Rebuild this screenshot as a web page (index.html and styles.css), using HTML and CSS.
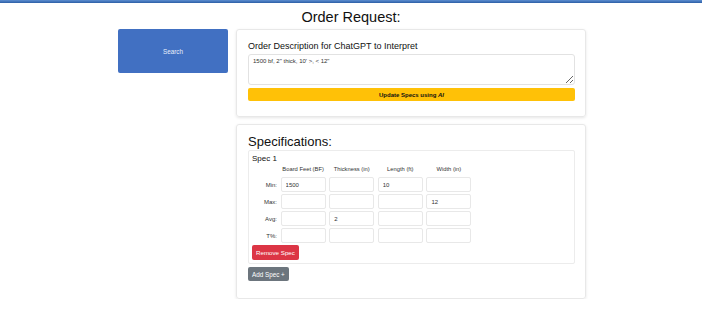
FILE: index.html
```html
<!DOCTYPE html>
<html lang="en">
<head>
    <meta charset="UTF-8">
    <meta name="viewport" content="width=device-width, initial-scale=1.0">
    <title>Order Request</title>
    <link rel="stylesheet" href="styles.css">
</head>
<body>
    <div class="topbar"></div>
    <h1 class="page-title">Order Request:</h1>

    <div class="layout">
        <div class="sidebar">
            <button class="search-btn">Search</button>
        </div>

        <div class="main">
            <div class="card">
                <h2 class="card-title">Order Description for ChatGPT to Interpret</h2>
                <textarea class="order-text">1500 bf, 2" thick, 10' &gt;, &lt; 12"</textarea>
                <button class="update-btn">Update Specs using <i>AI</i></button>
            </div>

            <div class="card specs-card">
                <h2 class="specs-title">Specifications:</h2>
                <div class="spec-box">
                    <h3 class="spec-name">Spec 1</h3>
                    <div class="spec-grid">
                        <span></span>
                        <span class="col-head">Board Feet (BF)</span>
                        <span class="col-head">Thickness (in)</span>
                        <span class="col-head">Length (ft)</span>
                        <span class="col-head">Width (in)</span>

                        <label class="row-label">Min:</label>
                        <input type="text" value="1500">
                        <input type="text">
                        <input type="text" value="10">
                        <input type="text">

                        <label class="row-label">Max:</label>
                        <input type="text">
                        <input type="text">
                        <input type="text">
                        <input type="text" value="12">

                        <label class="row-label">Avg:</label>
                        <input type="text">
                        <input type="text" value="2">
                        <input type="text">
                        <input type="text">

                        <label class="row-label">T%:</label>
                        <input type="text">
                        <input type="text">
                        <input type="text">
                        <input type="text">
                    </div>
                    <button class="remove-btn">Remove Spec</button>
                </div>
                <button class="add-btn">Add Spec +</button>
            </div>
        </div>
    </div>
</body>
</html>
```

FILE: styles.css
```css
body {
    font-family: "Liberation Sans", Arial, sans-serif;
    margin: 0;
    padding: 0;
    background: white;
    color: #212529;
}

.topbar {
    height: 3px;
    background: linear-gradient(#5d8ed0, #2c5ea6);
}

.page-title {
    text-align: center;
    font-size: 14.5px;
    font-weight: normal;
    line-height: 18px;
    margin: 5px 0 3px;
    color: #111;
}

.layout {
    display: flex;
    align-items: flex-start;
    gap: 8px;
    width: 468px;
    padding-left: 2px;
    margin: 0 auto;
}

.sidebar {
    width: 110px;
}

.search-btn {
    width: 110px;
    height: 44px;
    background: #4170c2;
    color: #e8eefa;
    border: none;
    border-radius: 2px;
    font-family: inherit;
    font-size: 6.3px;
    cursor: pointer;
}

.main {
    width: 350px;
    display: flex;
    flex-direction: column;
    gap: 7px;
}

.card {
    border: 1px solid #e8e8e8;
    border-radius: 3px;
    box-shadow: 0 1px 3px rgba(0, 0, 0, 0.1);
    padding: 11px 10px 15px 11px;
    display: flex;
    flex-direction: column;
}

.card-title {
    font-size: 9px;
    font-weight: normal;
    line-height: 11px;
    margin: 0 0 2px;
    color: #111;
}

.order-text {
    height: 31px;
    box-sizing: border-box;
    border: 1px solid #e2e2e2;
    border-radius: 3px;
    padding: 3px 4px;
    font-family: inherit;
    font-size: 6px;
    color: #333;
    margin: 0;
}

.update-btn {
    margin-top: 3px;
    height: 13px;
    background: #ffc107;
    border: none;
    border-radius: 2px;
    font-family: inherit;
    font-size: 6px;
    font-weight: bold;
    color: #111;
    padding: 0;
}

.specs-card {
    padding-top: 9px;
    padding-bottom: 17px;
}

.specs-title {
    font-size: 13px;
    font-weight: normal;
    line-height: 16px;
    margin: 0;
    color: #111;
}

.spec-box {
    border: 1px solid #ececec;
    border-radius: 2px;
    padding: 3px;
    display: flex;
    flex-direction: column;
    align-items: flex-start;
}

.spec-name {
    font-size: 8px;
    font-weight: normal;
    line-height: 10px;
    margin: 0 0 1px;
    color: #111;
}

.spec-grid {
    display: grid;
    grid-template-columns: 25px repeat(4, 45px);
    column-gap: 3.6px;
    row-gap: 2px;
    align-items: center;
}

.col-head {
    font-size: 5.8px;
    line-height: 8px;
    padding-bottom: 2px;
    text-align: center;
    color: #333;
}

.row-label {
    font-size: 6px;
    text-align: right;
    color: #333;
}

.spec-grid input {
    width: 45px;
    height: 15px;
    box-sizing: border-box;
    border: 1px solid #e8e8e8;
    border-radius: 2px;
    padding: 0 4px;
    font-family: inherit;
    font-size: 6px;
    color: #333;
    margin: 0;
}

.remove-btn {
    margin-top: 2px;
    height: 15px;
    padding: 0 4px;
    background: #dc3545;
    color: white;
    border: none;
    border-radius: 2px;
    font-family: inherit;
    font-size: 6.2px;
}

.add-btn {
    align-self: flex-start;
    margin-top: 3px;
    height: 14px;
    padding: 0 4px;
    background: #6c757d;
    color: white;
    border: none;
    border-radius: 2px;
    font-family: inherit;
    font-size: 6.3px;
}
```
